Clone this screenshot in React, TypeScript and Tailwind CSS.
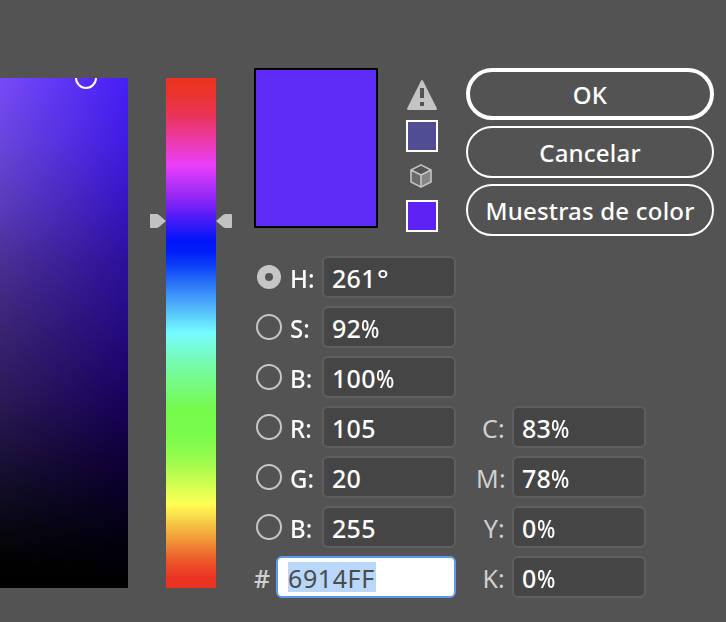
type Channel = { label: string; value: string; unit?: string; selected?: boolean };

const channels: Channel[] = [
  { label: "H:", value: "261", unit: "°", selected: true },
  { label: "S:", value: "92", unit: "%" },
  { label: "B:", value: "100", unit: "%" },
  { label: "R:", value: "105" },
  { label: "G:", value: "20" },
  { label: "B:", value: "255" },
];

const inks: Channel[] = [
  { label: "C:", value: "83", unit: "%" },
  { label: "M:", value: "78", unit: "%" },
  { label: "Y:", value: "0", unit: "%" },
  { label: "K:", value: "0", unit: "%" },
];

function Radio({ selected }: { selected?: boolean }) {
  if (selected) {
    return (
      <span className="ml-px mr-px flex size-6 items-center justify-center rounded-full bg-[#c6c6c6]">
        <span className="size-2 rounded-full bg-[#535353]" />
      </span>
    );
  }
  return <span className="size-[26px] rounded-full border-2 border-[#c6c6c6]" />;
}

function Field({ value, unit }: { value: string; unit?: string }) {
  return (
    <div className="flex h-[42px] w-[134px] items-center rounded-[6px] border-2 border-[#5e5e5e] bg-[#454545] pl-[8px] pt-[3px] font-medium tracking-[0.3px] text-white">
      <span>{value}</span>
      {unit === "%" && <span className="origin-left scale-x-[0.86]">%</span>}
      {unit === "°" && <span className="ml-[1px] origin-left scale-x-110">°</span>}
    </div>
  );
}

function SaturationField() {
  return (
    <div className="relative mt-[78px] h-[510px] w-32 overflow-hidden bg-[linear-gradient(to_bottom,#784bf8_0%,#6b47dc_12%,#5a3dba_25%,#4b3094_36%,#3c2674_48%,#2e1c5c_61%,#1b1238_74%,#0e0b1c_84%,#040406_93%,#000_98%)]">
      <div className="size-full bg-[linear-gradient(to_bottom,#451ff6_0%,#3f1be4_12%,#3615c0_25%,#2c109c_36%,#230a82_48%,#190260_62%,#0f003b_74%,#07001f_84%,#02000a_93%,#000_98%)] [mask-image:linear-gradient(to_right,transparent,black)]" />
      <span className="absolute -top-[11px] left-[75px] size-[22px] rounded-full border-2 border-white" />
    </div>
  );
}

function HueSlider() {
  return (
    <div className="ml-[22px] mt-[78px] flex h-[510px]">
      <svg className="mt-[136px] h-[14px] w-4" viewBox="0 0 16 14">
        <path d="M0 0h7l2 1 7 6-7 6-2 1H0z" fill="#c2c2c2" />
      </svg>
      <div className="w-[50px] bg-[linear-gradient(to_bottom,#eb3323_0%,#eb3328_2.5%,#ea345b_7.5%,#ea3ff8_17%,#8b25f5_24%,#3a1af6_28.5%,#0014f8_32%,#001cf8_34%,#0a3cf8_36.5%,#3a8cf8_42%,#76fcfe_50%,#76fba6_56.5%,#75fb4c_65%,#78fb4c_70%,#a0fc4e_75.5%,#ffff54_83.5%,#f0a03a_90%,#eb5229_95%,#eb3323_98%,#eb3323_100%)]" />
      <svg className="mt-[136px] h-[14px] w-4" viewBox="0 0 16 14">
        <path d="M16 1q0-1-1-1H9L7 1 0 7l7 6 2 1h6q1 0 1-1z" fill="#c2c2c2" />
      </svg>
    </div>
  );
}

function WarningIcon() {
  return (
    <svg className="mt-3 h-[30px] w-8" viewBox="0 0 32 30">
      <path d="M15 .7Q16-.7 17 .7L30.8 28.3Q31.3 30 29.8 30H2.2Q.7 30 1.2 28.3z" fill="#c4c4c4" />
      <path d="M14 8h4v10h-4zM14 22h4v4h-4z" fill="#535353" />
    </svg>
  );
}

function CubeIcon() {
  return (
    <svg className="mt-3 h-6 w-[30px]" viewBox="0 0 30 24" strokeLinejoin="round">
      <path d="M5 6l10 5v12L5 18z" fill="#6b6b6b" />
      <path d="M25 6l-10 5v12l10-5z" fill="#858585" />
      <path d="M15 .9l10 5.1v12L15 23.1 5 18V6zM5 6l10 5 10-5M15 11v12" fill="none" stroke="#c4c4c4" strokeWidth="1.6" />
    </svg>
  );
}

export default function App() {
  return (
    <main className="flex h-[622px] w-[726px] overflow-hidden bg-[#535353] font-['Noto_Sans','Open_Sans',sans-serif] text-[25px] leading-none text-white">
      <SaturationField />
      <HueSlider />
      <section className="ml-[22px] mt-[68px] flex flex-col">
        <div className="flex h-[188px]">
          <div className="h-40 w-[124px] border-2 border-black bg-[#5f2bf6]" />
          <div className="ml-7 flex w-8 flex-col">
            <WarningIcon />
            <div className="mt-[10px] h-8 border-2 border-white bg-[#4f4c93]" />
            <CubeIcon />
            <div className="mt-3 h-8 border-2 border-white bg-[#5d22f6]" />
          </div>
          <div className="ml-7 flex w-[248px] flex-col gap-[6px] text-[24px] font-medium tracking-[0.2px]">
            <button className="h-[52px] rounded-full border-4 border-white pt-[2px]">OK</button>
            <button className="h-[52px] rounded-full border-2 border-white pt-[2px]">Cancelar</button>
            <button className="h-[52px] whitespace-nowrap rounded-full border-2 border-white pt-[2px]">Muestras de color</button>
          </div>
        </div>
        <div className="flex items-end">
          <div className="flex flex-col gap-2 pl-[2px]">
            {channels.map((c, i) => (
              <div key={i} className="flex h-[42px] items-center">
                <Radio selected={c.selected} />
                <span className="w-10 pl-2 pt-[2px]">
                  <span className="inline-block origin-left scale-x-[0.96] font-medium">{c.label}</span>
                </span>
                <Field value={c.value} unit={c.unit} />
              </div>
            ))}
            <div className="flex h-[42px] items-center">
              <span className="w-5 -indent-[2px] pt-[3px] font-medium text-[#cfcfcf]">#</span>
              <div className="flex h-[42px] w-[180px] items-center rounded-[6px] border-2 border-[#5a9bf0] bg-white pl-[10px]">
                <span className="h-[30px] w-[88px] whitespace-nowrap bg-[#b8d7fb] pt-[4px] tracking-[0.6px] text-[#4b4b4b]">6914FF</span>
              </div>
            </div>
          </div>
          <div className="ml-5 flex flex-col gap-2">
            {inks.map((c) => (
              <div key={c.label} className="flex h-[42px] items-center">
                <span className="w-9 pr-[7px] pt-[3px] text-right tracking-[0.2px] text-[#cfcfcf]">{c.label}</span>
                <Field value={c.value} unit={c.unit} />
              </div>
            ))}
          </div>
        </div>
      </section>
    </main>
  );
}
